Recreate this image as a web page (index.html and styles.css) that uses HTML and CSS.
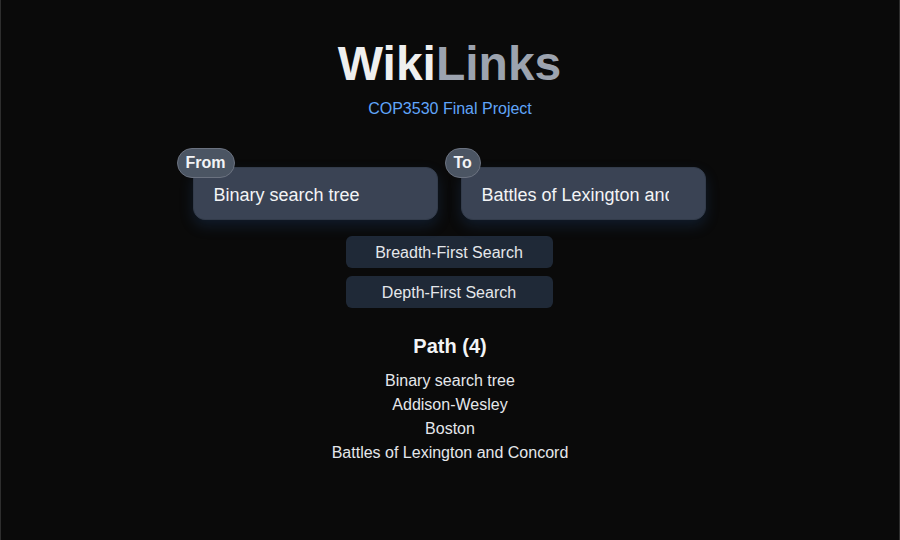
FILE: index.html
```html
<!DOCTYPE html>
<html>
<head>
<meta charset="utf-8">
<link rel="stylesheet" href="styles.css">
</head>
<body>
<div class="page">
  <h1 class="title"><span class="wiki">Wiki</span><span class="links">Links</span></h1>
  <p class="subtitle">COP3530 Final Project</p>
  <div class="fields">
    <div class="field">
      <span class="label">From</span>
      <input class="input" type="text" value="Binary search tree">
    </div>
    <div class="field">
      <span class="label">To</span>
      <input class="input" type="text" value="Battles of Lexington and Concord">
    </div>
  </div>
  <div class="actions">
    <button class="btn">Breadth-First Search</button>
    <button class="btn">Depth-First Search</button>
  </div>
  <h2 class="path-title">Path (4)</h2>
  <ul class="path">
    <li>Binary search tree</li>
    <li>Addison-Wesley</li>
    <li>Boston</li>
    <li>Battles of Lexington and Concord</li>
  </ul>
</div>
</body>
</html>
```
FILE: styles.css
```css
html, body {
  margin: 0;
  padding: 0;
  background: #0a0a0a;
}
.page {
  box-sizing: border-box;
  width: 900px;
  height: 540px;
  border-left: 1px solid #2e2e2e;
  border-right: 1px solid #2e2e2e;
  background: #0a0a0a;
  font-family: "Liberation Sans", Arial, sans-serif;
  color: #e5e7eb;
  display: flex;
  flex-direction: column;
  align-items: center;
  padding-top: 36px;
}
.title {
  margin: 0;
  font-size: 48px;
  line-height: 56px;
  font-weight: 700;
  margin-left: -1px;
}
.wiki { color: #efefef; }
.links { color: #9ca3af; }
.subtitle {
  margin: 5px 0 0;
  font-size: 16px;
  line-height: 24px;
  color: #60a5fa;
}
.fields {
  margin-top: 46px;
  display: flex;
  gap: 23px;
  margin-left: -2px;
}
.field {
  position: relative;
}
.label {
  position: absolute;
  left: -16px;
  top: -19px;
  height: 30px;
  box-sizing: border-box;
  padding: 0 8px;
  border-radius: 15px;
  background: #4b5563;
  border: 1px solid #6b7280;
  color: #f3f4f6;
  font-weight: 700;
  font-size: 16px;
  line-height: 28px;
  z-index: 1;
}
.input {
  box-sizing: border-box;
  width: 245px;
  height: 53px;
  padding: 4px 36px 0 20px;
  border: 1px solid #333c4b;
  border-radius: 12px;
  background: #3a4354;
  color: #f3f4f6;
  font-family: "Liberation Sans", Arial, sans-serif;
  font-size: 18px;
  outline: none;
  box-shadow: 0 6px 14px rgba(40, 90, 160, 0.22);
  display: block;
}
.actions {
  margin-top: 16px;
  display: flex;
  flex-direction: column;
  gap: 8px;
  margin-left: -2px;
}
.btn {
  width: 207px;
  height: 32px;
  border: none;
  border-radius: 6px;
  background: #1f2937;
  color: #e5e7eb;
  font-family: "Liberation Sans", Arial, sans-serif;
  font-size: 16px;
  padding: 2px 0 0;
}
.path-title {
  margin: 24px 0 0;
  font-size: 20px;
  line-height: 28px;
  font-weight: 700;
  color: #f3f4f6;
}
.path {
  list-style: none;
  margin: 9px 0 0;
  padding: 0;
  text-align: center;
  font-size: 16px;
  line-height: 24px;
  color: #e5e7eb;
}
```
